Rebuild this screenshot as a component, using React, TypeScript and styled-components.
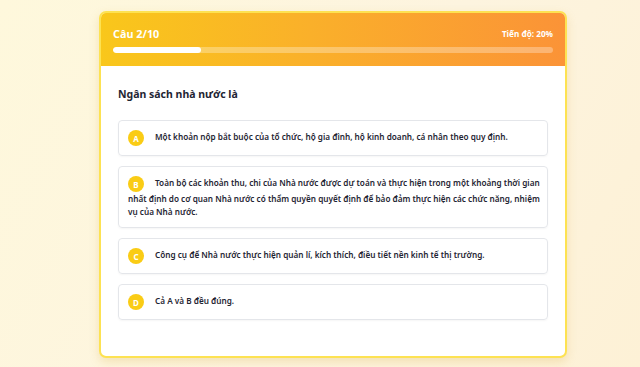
import React from 'react';
import styled, { createGlobalStyle } from 'styled-components';

const GlobalStyle = createGlobalStyle`
  html, body {
    margin: 0;
    padding: 0;
  }
  body {
    width: 640px;
    height: 367px;
    overflow: hidden;
    font-family: 'Noto Sans', 'Open Sans', sans-serif;
    background: linear-gradient(120deg, #fef8dc 0%, #fdf4df 55%, #fdf1d6 100%);
  }
`;

interface Option {
  key: string;
  text: string;
}

const OPTIONS: Option[] = [
  {
    key: 'A',
    text: 'Một khoản nộp bắt buộc của tổ chức, hộ gia đình, hộ kinh doanh, cá nhân theo quy định.',
  },
  {
    key: 'B',
    text: 'Toàn bộ các khoản thu, chi của Nhà nước được dự toán và thực hiện trong một khoảng thời gian nhất định do cơ quan Nhà nước có thẩm quyền quyết định để bảo đảm thực hiện các chức năng, nhiệm vụ của Nhà nước.',
  },
  {
    key: 'C',
    text: 'Công cụ để Nhà nước thực hiện quản lí, kích thích, điều tiết nền kinh tế thị trường.',
  },
  { key: 'D', text: 'Cả A và B đều đúng.' },
];

const current = 2;
const total = 10;
const progress = 20;

export default function App() {
  return (
    <>
      <GlobalStyle />
      <Page>
        <QuizCard>
          <Header>
            <HeaderRow>
              <Counter>
                Câu {current}/{total}
              </Counter>
              <ProgressLabel>Tiến độ: {progress}%</ProgressLabel>
            </HeaderRow>
            <Track>
              <Fill style={{ width: `${progress}%` }} />
            </Track>
          </Header>
          <Body>
            <Question>Ngân sách nhà nước là</Question>
            <OptionList>
              {OPTIONS.map((o) => (
                <OptionItem key={o.key}>
                  <Badge>{o.key}</Badge>
                  {o.text}
                </OptionItem>
              ))}
            </OptionList>
          </Body>
        </QuizCard>
      </Page>
    </>
  );
}

const Page = styled.div`
  padding: 11px 0 0 99px;
`;

const QuizCard = styled.div`
  width: 464px;
  background: #fff;
  border: 2px solid #fde252;
  border-radius: 7px;
  overflow: hidden;
  box-shadow: 0 4px 10px rgba(214, 170, 60, 0.25);
`;

const Header = styled.div`
  background: linear-gradient(90deg, #f9c71b 0%, #fab02a 45%, #fb9337 100%);
  padding: 11px 12px 13px;
`;

const HeaderRow = styled.div`
  display: flex;
  justify-content: space-between;
  align-items: center;
  height: 18px;
  margin-bottom: 5px;
  color: #fff;
`;

const Counter = styled.div`
  font-size: 10.8px;
  font-weight: 700;
`;

const ProgressLabel = styled.div`
  font-size: 8.2px;
  font-weight: 700;
`;

const Track = styled.div`
  height: 6px;
  border-radius: 3px;
  background: rgba(255, 255, 255, 0.3);
  overflow: hidden;
`;

const Fill = styled.div`
  height: 100%;
  border-radius: 3px;
  background: #fff;
`;

const Body = styled.div`
  padding: 21px 17px 36px;
`;

const Question = styled.h2`
  margin: 0 0 19px;
  font-size: 10.5px;
  line-height: 14px;
  font-weight: 700;
  color: #1f2533;
`;

const OptionList = styled.div`
  display: flex;
  flex-direction: column;
  gap: 10px;
`;

const OptionItem = styled.div`
  border: 1px solid #e4e6ea;
  border-radius: 4px;
  padding: 9px 5px 9px 9px;
  font-size: 8.2px;
  line-height: 13px;
  font-weight: 600;
  color: #1f2533;
  box-shadow: 0 1px 2px rgba(0, 0, 0, 0.04);
`;

const Badge = styled.span`
  display: inline-flex;
  align-items: center;
  justify-content: center;
  width: 16px;
  height: 16px;
  margin-right: 11px;
  border-radius: 50%;
  background: #facc15;
  color: #fff;
  font-size: 8px;
  font-weight: 700;
  vertical-align: middle;
`;
